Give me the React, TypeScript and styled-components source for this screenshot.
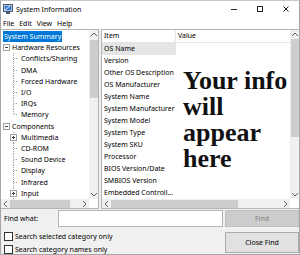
import React from 'react'
import styled, { createGlobalStyle } from 'styled-components'

const GlobalStyle = createGlobalStyle`
  html, body {
    margin: 0;
    padding: 0;
    background: #ffffff;
  }
  body {
    font-family: 'Noto Sans', 'Open Sans', sans-serif;
    font-size: 7px;
    color: #000000;
  }
`

interface ITreeItem {
  label: string
  level: 0 | 1
  expander?: 'minus' | 'plus'
  selected?: boolean
  last?: boolean
}

const tree: ITreeItem[] = [
  { label: 'System Summary', level: 0, selected: true },
  { label: 'Hardware Resources', level: 0, expander: 'minus' },
  { label: 'Conflicts/Sharing', level: 1 },
  { label: 'DMA', level: 1 },
  { label: 'Forced Hardware', level: 1 },
  { label: 'I/O', level: 1 },
  { label: 'IRQs', level: 1 },
  { label: 'Memory', level: 1, last: true },
  { label: 'Components', level: 0, expander: 'minus' },
  { label: 'Multimedia', level: 1, expander: 'plus' },
  { label: 'CD-ROM', level: 1 },
  { label: 'Sound Device', level: 1 },
  { label: 'Display', level: 1 },
  { label: 'Infrared', level: 1 },
  { label: 'Input', level: 1, expander: 'plus' },
]

const items = [
  'OS Name',
  'Version',
  'Other OS Description',
  'OS Manufacturer',
  'System Name',
  'System Manufacturer',
  'System Model',
  'System Type',
  'System SKU',
  'Processor',
  'BIOS Version/Date',
  'SMBIOS Version',
  'Embedded Controll...',
]

const Arrow = ({ dir }: { dir: 'up' | 'down' | 'left' | 'right' }) => {
  const points = {
    up: '1,5 4,2 7,5',
    down: '1,2 4,5 7,2',
    left: '5,1 2,4 5,7',
    right: '2,1 5,4 2,7',
  }[dir]
  return (
    <svg width="8" height="8" viewBox="0 0 8 8">
      <polyline points={points} fill="none" stroke="#606060" strokeWidth="1" />
    </svg>
  )
}

const AppIcon = () => (
  <svg width="10" height="10" viewBox="0 0 10 10">
    <rect x="0.5" y="0.5" width="9" height="7" fill="#ffffff" stroke="#4a5a70" />
    <rect x="1.5" y="1.5" width="7" height="5" fill="#3a78c8" />
    <path d="M2 6 L7 2" stroke="#dbe9f8" strokeWidth="1" />
    <rect x="3" y="8" width="4" height="2" fill="#4a5a70" />
  </svg>
)

const Branch = ({ expander, last }: { expander?: 'minus' | 'plus'; last?: boolean }) => (
  <svg width="8" height="11" viewBox="0 0 8 11">
    <line x1="3.5" y1="0" x2="3.5" y2={last ? 6 : 11} stroke="#a0a0a0" strokeDasharray="1 1" />
    <line x1="4" y1="5.5" x2="8" y2="5.5" stroke="#a0a0a0" strokeDasharray="1 1" />
    {expander && (
      <>
        <rect x="0.5" y="2.5" width="6" height="6" fill="#ffffff" stroke="#a0a0a0" />
        <line x1="2" y1="5.5" x2="5" y2="5.5" stroke="#404040" />
        {expander === 'plus' && <line x1="3.5" y1="4" x2="3.5" y2="7" stroke="#404040" />}
      </>
    )}
  </svg>
)

const Expander = ({ kind }: { kind: 'minus' | 'plus' }) => (
  <svg width="7" height="7" viewBox="0 0 7 7">
    <rect x="0.5" y="0.5" width="6" height="6" fill="#ffffff" stroke="#a0a0a0" />
    <line x1="2" y1="3.5" x2="5" y2="3.5" stroke="#404040" />
    {kind === 'plus' && <line x1="3.5" y1="2" x2="3.5" y2="5" stroke="#404040" />}
  </svg>
)

const App = () => {
  return (
    <Window>
      <GlobalStyle />
      <TitleBar>
        <AppIcon />
        <Title>System Information</Title>
        <Controls>
          <ControlButton>
            <svg width="6" height="6" viewBox="0 0 6 6">
              <line x1="0" y1="3.5" x2="6" y2="3.5" stroke="#222" />
            </svg>
          </ControlButton>
          <ControlButton>
            <svg width="6" height="6" viewBox="0 0 6 6">
              <rect x="0.5" y="0.5" width="5" height="5" fill="none" stroke="#222" />
            </svg>
          </ControlButton>
          <ControlButton>
            <svg width="6" height="6" viewBox="0 0 6 6">
              <path d="M0.5 0.5 L5.5 5.5 M5.5 0.5 L0.5 5.5" stroke="#222" />
            </svg>
          </ControlButton>
        </Controls>
      </TitleBar>
      <MenuBar>
        <MenuItem>File</MenuItem>
        <MenuItem>Edit</MenuItem>
        <MenuItem>View</MenuItem>
        <MenuItem>Help</MenuItem>
      </MenuBar>
      <Main>
        <TreePane>
          <PaneBody>
            <TreeList>
              {tree.map(item => (
                <TreeRow key={item.label} $level={item.level}>
                  {item.level === 0 && item.expander && <Expander kind={item.expander} />}
                  {item.level === 1 && <Branch expander={item.expander} last={item.last} />}
                  <TreeLabel $selected={item.selected}>{item.label}</TreeLabel>
                </TreeRow>
              ))}
            </TreeList>
            <VScroll>
              <ArrowCell>
                <Arrow dir="up" />
              </ArrowCell>
              <VTrack>
                <VThumb style={{ top: 1, height: 58 }} />
              </VTrack>
              <ArrowCell>
                <Arrow dir="down" />
              </ArrowCell>
            </VScroll>
          </PaneBody>
          <HScrollRow>
            <HScroll>
              <ArrowCell>
                <Arrow dir="left" />
              </ArrowCell>
              <HTrack>
                <HThumb style={{ left: 0, width: 60 }} />
              </HTrack>
              <ArrowCell>
                <Arrow dir="right" />
              </ArrowCell>
            </HScroll>
            <Corner />
          </HScrollRow>
        </TreePane>
        <ListPane>
          <PaneBody>
            <Table>
              <Header>
                <HeaderCell $width={74}>Item</HeaderCell>
                <HeaderCell>Value</HeaderCell>
              </Header>
              <TableBody>
                <ItemColumn>
                  {items.map((label, i) => (
                    <ItemCell key={label} $selected={i === 0}>
                      {label}
                    </ItemCell>
                  ))}
                </ItemColumn>
                <ValueColumn>
                  <BigText>
                    Your info
                    <br />
                    will
                    <br />
                    appear
                    <br />
                    here
                  </BigText>
                </ValueColumn>
              </TableBody>
            </Table>
            <VScroll>
              <ArrowCell>
                <Arrow dir="up" />
              </ArrowCell>
              <VTrack>
                <VThumb style={{ top: 0, height: 98 }} />
              </VTrack>
              <ArrowCell>
                <Arrow dir="down" />
              </ArrowCell>
            </VScroll>
          </PaneBody>
          <HScrollRow>
            <HScroll>
              <ArrowCell>
                <Arrow dir="left" />
              </ArrowCell>
              <HTrack>
                <HThumb style={{ left: 0, width: 127 }} />
              </HTrack>
              <ArrowCell>
                <Arrow dir="right" />
              </ArrowCell>
            </HScroll>
            <Corner />
          </HScrollRow>
        </ListPane>
      </Main>
      <FindBar>
        <FindLabel>Find what:</FindLabel>
        <FindInput />
        <Button disabled>Find</Button>
        <Options>
          <CheckRow>
            <CheckBox />
            Search selected category only
          </CheckRow>
          <CheckRow>
            <CheckBox />
            Search category names only
          </CheckRow>
        </Options>
        <CloseButton>Close Find</CloseButton>
      </FindBar>
    </Window>
  )
}

const Window = styled.div`
  width: 300px;
  height: 255px;
  box-sizing: border-box;
  border: 1px solid #a6a6a6;
  border-top-color: #c8c8c8;
  display: flex;
  flex-direction: column;
  background: #f0f0f0;
  overflow: hidden;
`

const TitleBar = styled.div`
  height: 16px;
  display: flex;
  align-items: center;
  padding-left: 2px;
  background: #ffffff;
  flex-shrink: 0;
`

const Title = styled.span`
  margin-left: 3px;
  font-size: 7px;
`

const Controls = styled.div`
  margin-left: auto;
  display: flex;
`

const ControlButton = styled.div`
  width: 26px;
  height: 15px;
  display: flex;
  align-items: center;
  justify-content: center;
`

const MenuBar = styled.div`
  height: 12px;
  display: flex;
  align-items: center;
  gap: 5px;
  padding-left: 2px;
  background: #ffffff;
  flex-shrink: 0;
`

const MenuItem = styled.span`
  font-size: 7px;
`

const Main = styled.div`
  height: 180px;
  display: flex;
  gap: 2px;
  flex-shrink: 0;
`

const Pane = styled.div`
  display: flex;
  flex-direction: column;
  border: 1px solid #b4b4b4;
  background: #ffffff;
  box-sizing: border-box;
`

const TreePane = styled(Pane)`
  width: 98px;
  border-left: none;
`

const ListPane = styled(Pane)`
  flex: 1;
  border-right: none;
`

const PaneBody = styled.div`
  flex: 1;
  display: flex;
  min-height: 0;
`

const TreeList = styled.div`
  flex: 1;
  padding-top: 1px;
  overflow: hidden;
`

const TreeRow = styled.div<{ $level: number }>`
  height: 11.2px;
  display: flex;
  align-items: center;
  gap: ${props => (props.$level ? 2 : 1)}px;
  padding-left: ${props => (props.$level ? 9 : 2)}px;
  white-space: nowrap;
`

const TreeLabel = styled.span<{ $selected?: boolean }>`
  line-height: 11px;
  padding: 0 1px;
  background: ${props => (props.$selected ? '#0078d7' : 'transparent')};
  color: ${props => (props.$selected ? '#ffffff' : '#000000')};
`

const VScroll = styled.div`
  width: 9px;
  display: flex;
  flex-direction: column;
  background: #f0f0f0;
  flex-shrink: 0;
`

const ArrowCell = styled.div`
  width: 9px;
  height: 9px;
  display: flex;
  align-items: center;
  justify-content: center;
  flex-shrink: 0;
`

const VTrack = styled.div`
  flex: 1;
  position: relative;
`

const VThumb = styled.div`
  position: absolute;
  left: 1px;
  right: 0;
  background: #cdcdcd;
`

const HScrollRow = styled.div`
  height: 9px;
  display: flex;
  flex-shrink: 0;
`

const HScroll = styled.div`
  flex: 1;
  display: flex;
  background: #f0f0f0;
`

const HTrack = styled.div`
  flex: 1;
  position: relative;
`

const HThumb = styled.div`
  position: absolute;
  top: 1px;
  bottom: 0;
  background: #cdcdcd;
`

const Corner = styled.div`
  width: 9px;
  background: #ffffff;
`

const Table = styled.div`
  flex: 1;
  display: flex;
  flex-direction: column;
  overflow: hidden;
`

const Header = styled.div`
  height: 12px;
  display: flex;
  border-bottom: 1px solid #e5e5e5;
  flex-shrink: 0;
`

const HeaderCell = styled.div<{ $width?: number }>`
  ${props => (props.$width ? `width: ${props.$width}px;` : 'flex: 1;')}
  padding-left: 2px;
  line-height: 12px;
  border-right: 1px solid #e5e5e5;
  box-sizing: border-box;
  &:last-child {
    border-right: none;
  }
`

const TableBody = styled.div`
  flex: 1;
  display: flex;
`

const ItemColumn = styled.div`
  width: 74px;
  display: flex;
  flex-direction: column;
  flex-shrink: 0;
`

const ItemCell = styled.div<{ $selected?: boolean }>`
  height: 12px;
  line-height: 12px;
  padding-left: 2px;
  white-space: nowrap;
  overflow: hidden;
  background: ${props => (props.$selected ? '#e5e5e5' : 'transparent')};
`

const ValueColumn = styled.div`
  flex: 1;
  padding: 25px 0 0 7px;
`

const BigText = styled.div`
  font-family: 'Liberation Serif', 'Times New Roman', serif;
  font-weight: bold;
  font-size: 26px;
  line-height: 26px;
  color: #111111;
`

const FindBar = styled.div`
  flex: 1;
  display: grid;
  grid-template-columns: 52px 165px 74px;
  grid-template-rows: 17px 21px;
  column-gap: 2px;
  row-gap: 5px;
  padding: 1px 0 0 3px;
  align-items: center;
`

const FindLabel = styled.span`
  font-size: 7px;
`

const FindInput = styled.div`
  height: 17px;
  box-sizing: border-box;
  border: 1px solid #b4b4b4;
  background: #ffffff;
`

const Button = styled.div<{ disabled?: boolean }>`
  height: 17px;
  box-sizing: border-box;
  display: flex;
  align-items: center;
  justify-content: center;
  background: #cccccc;
  border: 1px solid #bfbfbf;
  color: #838383;
  font-size: 7px;
`

const CloseButton = styled.div`
  height: 21px;
  box-sizing: border-box;
  display: flex;
  align-items: center;
  justify-content: center;
  background: #e1e1e1;
  border: 1px solid #adadad;
  font-size: 7px;
`

const Options = styled.div`
  grid-column: 1 / 3;
  display: flex;
  flex-direction: column;
  gap: 4px;
  align-self: start;
`

const CheckRow = styled.label`
  display: flex;
  align-items: center;
  gap: 2px;
  height: 9px;
  font-size: 7px;
`

const CheckBox = styled.span`
  width: 9px;
  height: 9px;
  box-sizing: border-box;
  border: 1px solid #333333;
  background: #ffffff;
`

export default App
